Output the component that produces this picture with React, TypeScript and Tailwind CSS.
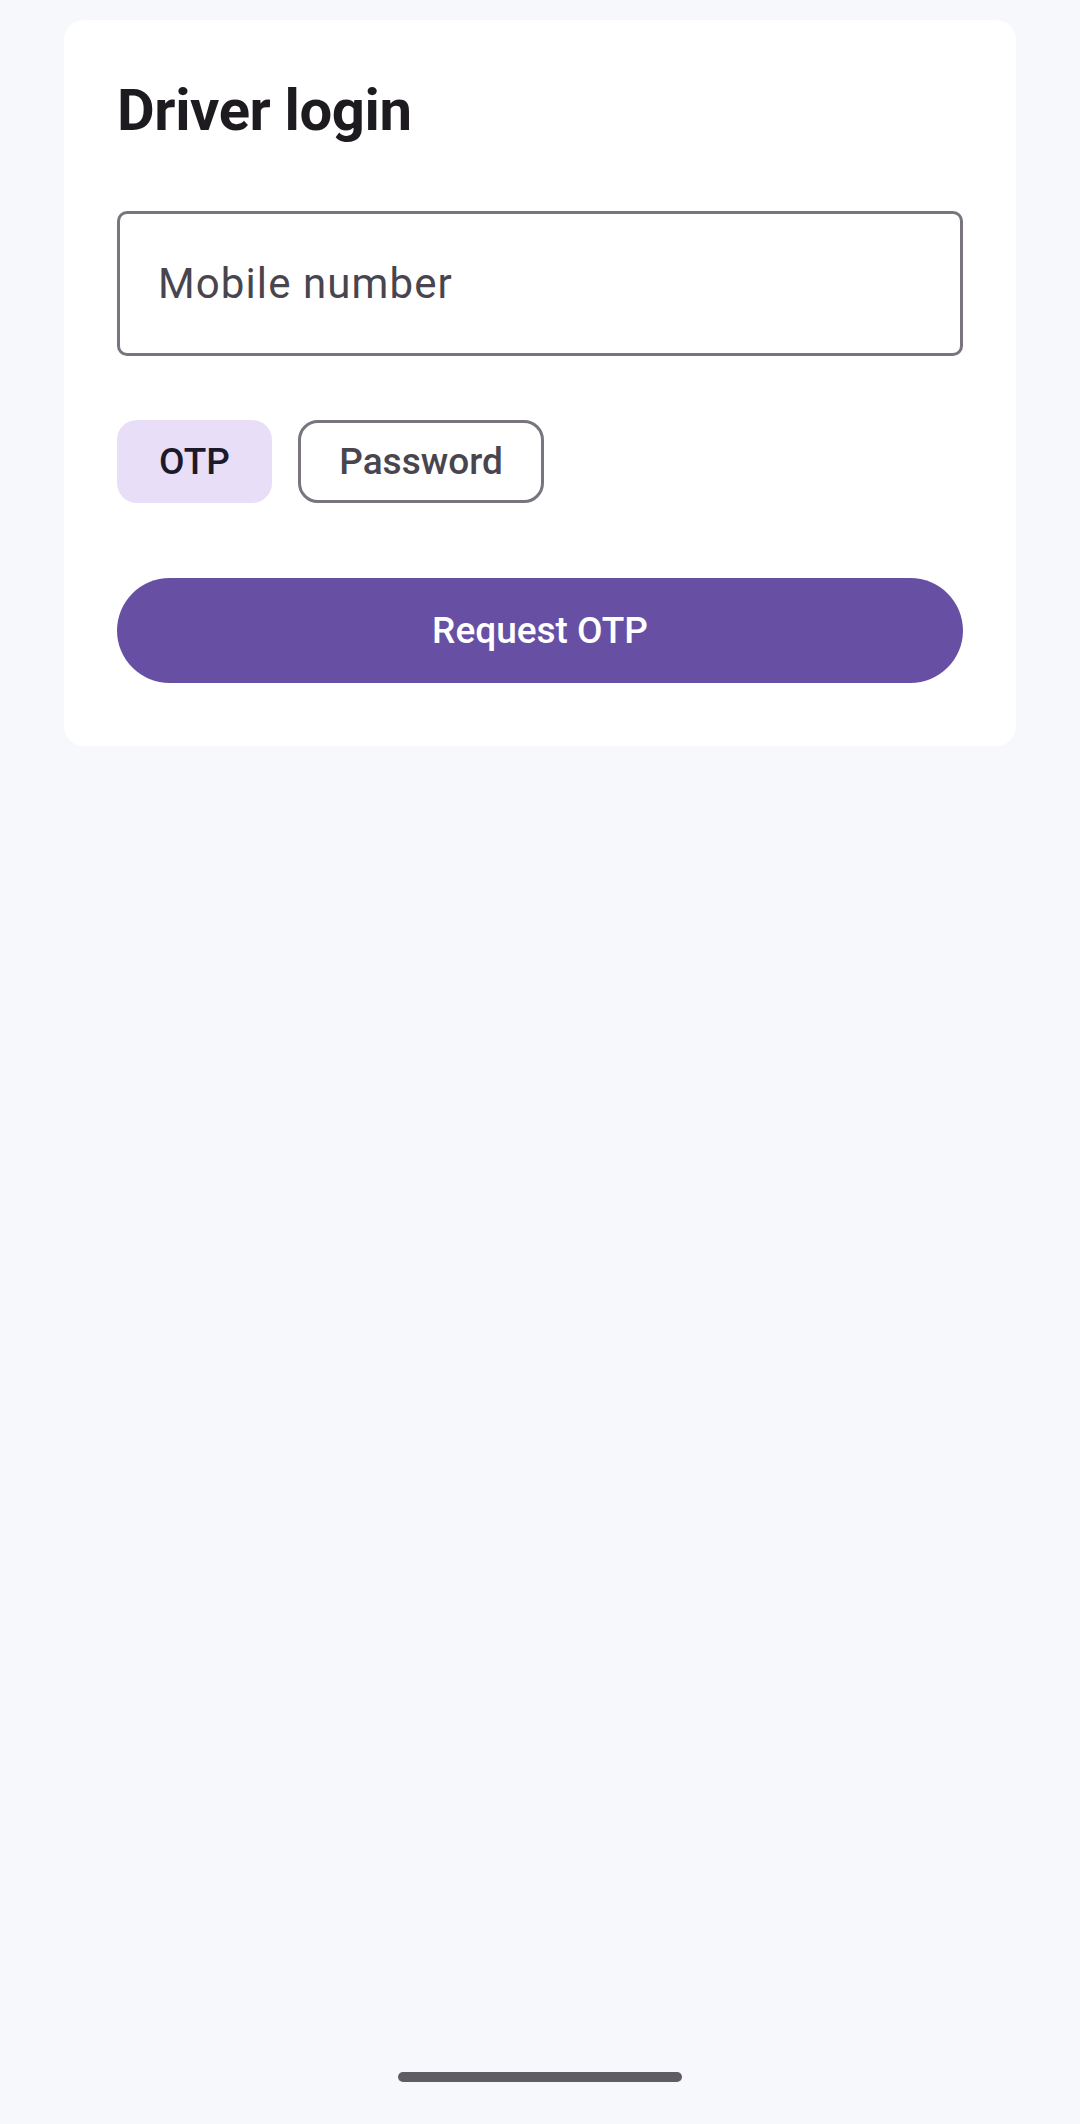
import { useState } from "react";

export default function App() {
  const [mode, setMode] = useState<"otp" | "password">("otp");

  return (
    <div
      className="flex flex-col h-[2124px] w-full bg-[#f7f8fc]"
      style={{ fontFamily: "Roboto, 'Noto Sans', sans-serif" }}
    >
      <div className="mx-[64px] mt-[20px] rounded-[20px] bg-white px-[53px] pt-[55px] pb-[63px]">
        <h1 className="text-[58px] leading-[70px] font-bold text-[#1d1b20] tracking-[-0.4px]">
          Driver login
        </h1>

        <input
          type="tel"
          placeholder="Mobile number"
          className="mt-[66px] block w-full h-[145px] rounded-[10px] border-[3px] border-[#79747e] bg-white pl-[38px] text-[42px] text-[#1d1b20] placeholder:text-[#49454f] outline-none tracking-[1.1px]"
        />

        <div className="mt-[64px] flex gap-[26px]">
          <button
            onClick={() => setMode("otp")}
            className={
              mode === "otp"
                ? "w-[155px] h-[83px] rounded-[20px] bg-[#e8def8] text-[37px] font-medium text-[#1d192b] flex items-center justify-center"
                : "w-[155px] h-[83px] rounded-[20px] border-[3px] border-[#79747e] text-[37px] font-medium text-[#49454f] flex items-center justify-center"
            }
          >
            OTP
          </button>
          <button
            onClick={() => setMode("password")}
            className={
              mode === "password"
                ? "w-[246px] h-[83px] rounded-[20px] bg-[#e8def8] text-[37px] font-medium text-[#1d192b] flex items-center justify-center"
                : "w-[246px] h-[83px] rounded-[20px] border-[3px] border-[#79747e] text-[37px] font-medium text-[#49454f] flex items-center justify-center"
            }
          >
            Password
          </button>
        </div>

        <button className="mt-[75px] w-full h-[105px] rounded-full bg-[#6750a4] text-white text-[37px] font-medium flex items-center justify-center">
          {mode === "otp" ? "Request OTP" : "Login"}
        </button>
      </div>

      <div className="flex-1" />

      <div className="mx-auto mb-[42px] h-[10px] w-[284px] rounded-full bg-[#5f5d63]" />
    </div>
  );
}
